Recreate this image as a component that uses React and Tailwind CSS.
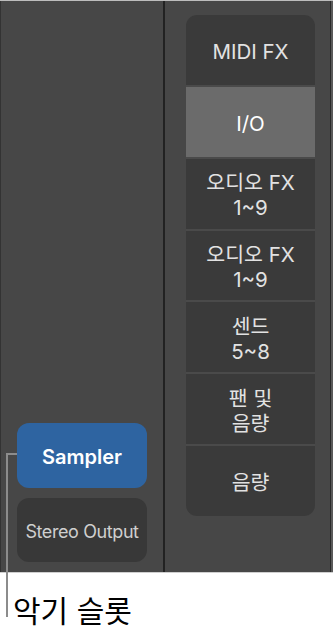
const FONT = { fontFamily: '"Inter", "Noto Sans CJK KR", sans-serif' };

const cells = [
  { label: ["MIDI FX"] },
  { label: ["I/O"], active: true },
  { label: ["오디오 FX", "1~9"] },
  { label: ["오디오 FX", "1~9"] },
  { label: ["센드", "5~8"] },
  { label: ["팬 및", "음량"] },
  { label: ["음량"] },
];

export default function App() {
  return (
    <div className="relative w-[333px] h-[633px] bg-white overflow-hidden" style={FONT}>
      {/* MIXER STRIP */}
      <div className="border-t border-[#bdbdbd]">
        <div className="flex h-[572px] bg-[#474747] border-b border-[#cfcfcf]">
          {/* LEFT: instrument + output */}
          <div className="w-[163px] border-l border-[#333] flex flex-col justify-end gap-[10px] pl-[16px] pb-[10px]">
            <div className="w-[130px] h-[65px] rounded-[12px] bg-[#2e64a1] flex items-center justify-center text-white text-[20px] font-semibold pt-[2px]">
              Sampler
            </div>
            <div className="w-[130px] h-[64px] rounded-[12px] bg-[#383838] flex items-center justify-center text-[#cfcfcf] text-[18px] tracking-[-0.4px] pt-[2px]">
              Stereo Output
            </div>
          </div>

          <div className="w-[2px] bg-[#222]" />

          {/* RIGHT: inspector sections */}
          <div className="flex-1 pl-[21px] pt-[14px]">
            <div className="w-[129px] h-[501px] rounded-[11px] overflow-hidden flex flex-col gap-[2px] bg-[#4a4a4a]">
              {cells.map((c, i) => (
                <div
                  key={i}
                  className={
                    "flex-1 flex flex-col items-center justify-center pt-[3px] text-[20.5px] leading-[25px] " +
                    (c.active ? "bg-[#6b6b6b] text-white" : "bg-[#3a3a3a] text-[#e2e2e2]")
                  }
                >
                  {c.label.map((l, j) => (
                    <span key={j}>{l}</span>
                  ))}
                </div>
              ))}
            </div>
          </div>

          <div className="w-[1px] bg-[#2a2a2a]" />
          <div className="w-[2px] bg-[#5a5a5a]" />
        </div>
      </div>

      {/* CALLOUT */}
      <div className="absolute left-[6px] top-[453px] w-[11px] h-[2px] bg-[#8c8c8c]" />
      <div className="absolute left-[6px] top-[453px] w-[2px] h-[164px] bg-[#8c8c8c]" />
      <div className="absolute left-[13px] top-[591px] text-[30px] leading-[40px] text-black">
        악기 슬롯
      </div>
    </div>
  );
}
